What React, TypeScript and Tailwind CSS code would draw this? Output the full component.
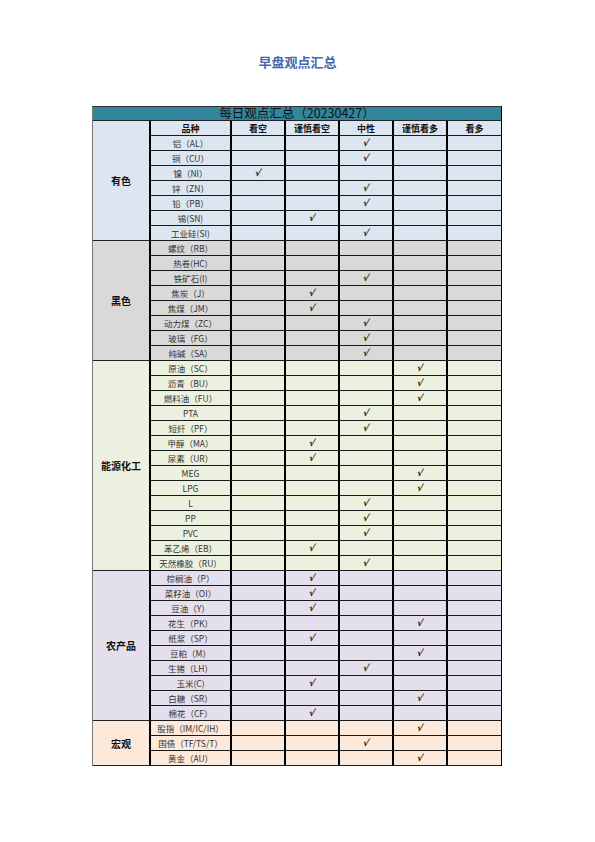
import React from "react";

type Row = [string, number];
type Section = { name: string; bg: string; header?: boolean; rows: Row[] };

const sections: Section[] = [
  {
    name: "有色",
    bg: "bg-[#dce6f1]",
    header: true,
    rows: [
      ["铝（AL）", 2],
      ["铜（CU）", 2],
      ["镍（NI）", 0],
      ["锌（ZN）", 2],
      ["铅（PB）", 2],
      ["锡(SN)", 1],
      ["工业硅(SI)", 2],
    ],
  },
  {
    name: "黑色",
    bg: "bg-[#d9d9d9]",
    rows: [
      ["螺纹（RB）", -1],
      ["热卷(HC)", -1],
      ["铁矿石(I)", 2],
      ["焦炭（J）", 1],
      ["焦煤（JM）", 1],
      ["动力煤（ZC）", 2],
      ["玻璃（FG）", 2],
      ["纯碱（SA）", 2],
    ],
  },
  {
    name: "能源化工",
    bg: "bg-[#ebf1de]",
    rows: [
      ["原油（SC）", 3],
      ["沥青（BU）", 3],
      ["燃料油（FU）", 3],
      ["PTA", 2],
      ["短纤（PF）", 2],
      ["甲醇（MA）", 1],
      ["尿素（UR）", 1],
      ["MEG", 3],
      ["LPG", 3],
      ["L", 2],
      ["PP", 2],
      ["PVC", 2],
      ["苯乙烯（EB）", 1],
      ["天然橡胶（RU）", 2],
    ],
  },
  {
    name: "农产品",
    bg: "bg-[#e4dfec]",
    rows: [
      ["棕榈油（P）", 1],
      ["菜籽油（OI）", 1],
      ["豆油（Y）", 1],
      ["花生（PK）", 3],
      ["纸浆（SP）", 1],
      ["豆粕（M）", 3],
      ["生猪（LH）", 2],
      ["玉米(C)", 1],
      ["白糖（SR）", 3],
      ["棉花（CF）", 1],
    ],
  },
  {
    name: "宏观",
    bg: "bg-[#fde9d9]",
    rows: [
      ["股指（IM/IC/IH）", 3],
      ["国债（TF/TS/T）", 2],
      ["黄金（AU）", 3],
    ],
  },
];

const headers = ["品种", "看空", "谨慎看空", "中性", "谨慎看多", "看多"];
const viewCls = [
  "w-[54px] border-r-2 border-black",
  "w-[54px] border-r-2 border-black",
  "w-[54px] border-r-2 border-black",
  "w-[54px] border-r-2 border-black",
  "w-[53px]",
];

function Check() {
  return (
    <span className="inline-block -skew-x-12 text-[9px] font-bold italic leading-none text-[#111] [font-family:'DejaVu_Sans',sans-serif]">
      √
    </span>
  );
}

export default function App() {
  return (
    <div className="w-[595px] min-h-[842px] bg-white [font-family:'Noto_Sans_CJK_SC',sans-serif]">
      <div className="pt-[54px] text-center text-[13px] leading-[16px] font-bold text-[#3f68ad]">
        早盘观点汇总
      </div>
      <div className="mt-[36px] ml-[92px] w-[410px] border-t border-l border-r border-t-[#333] border-l-[#777] border-r-black">
        <div className="flex h-[14px] items-center justify-center border-b border-[#222] bg-[#31869b] text-[12.5px] leading-none text-[#111]">
          每日观点汇总（20230427）
        </div>
        {sections.map((s) => (
          <div key={s.name} className={`flex ${s.bg}`}>
            <div className="flex w-[58px] shrink-0 items-center justify-center border-r-2 border-b border-r-black border-b-[#222] text-[10px] font-bold text-[#111]">
              {s.name}
            </div>
            <div className="flex flex-1 flex-col">
              {s.header && (
                <div className="flex h-[15px] border-b border-[#1a1a1a] text-[9px] font-bold leading-none text-[#111]">
                  <div className="flex w-[81px] items-center justify-center border-r-2 border-black">
                    {headers[0]}
                  </div>
                  {headers.slice(1).map((h, i) => (
                    <div key={h} className={`flex items-center justify-center ${viewCls[i]}`}>
                      {h}
                    </div>
                  ))}
                </div>
              )}
              {s.rows.map(([name, v]) => (
                <div key={name} className="flex h-[15px] border-b border-[#1a1a1a]">
                  <div className="flex w-[81px] items-center justify-center whitespace-nowrap border-r-2 border-black text-[8.5px] leading-none text-[#333]">
                    {name}
                  </div>
                  {viewCls.map((c, i) => (
                    <div key={i} className={`flex items-center justify-center ${c}`}>
                      {v === i ? <Check /> : null}
                    </div>
                  ))}
                </div>
              ))}
            </div>
          </div>
        ))}
      </div>
    </div>
  );
}
